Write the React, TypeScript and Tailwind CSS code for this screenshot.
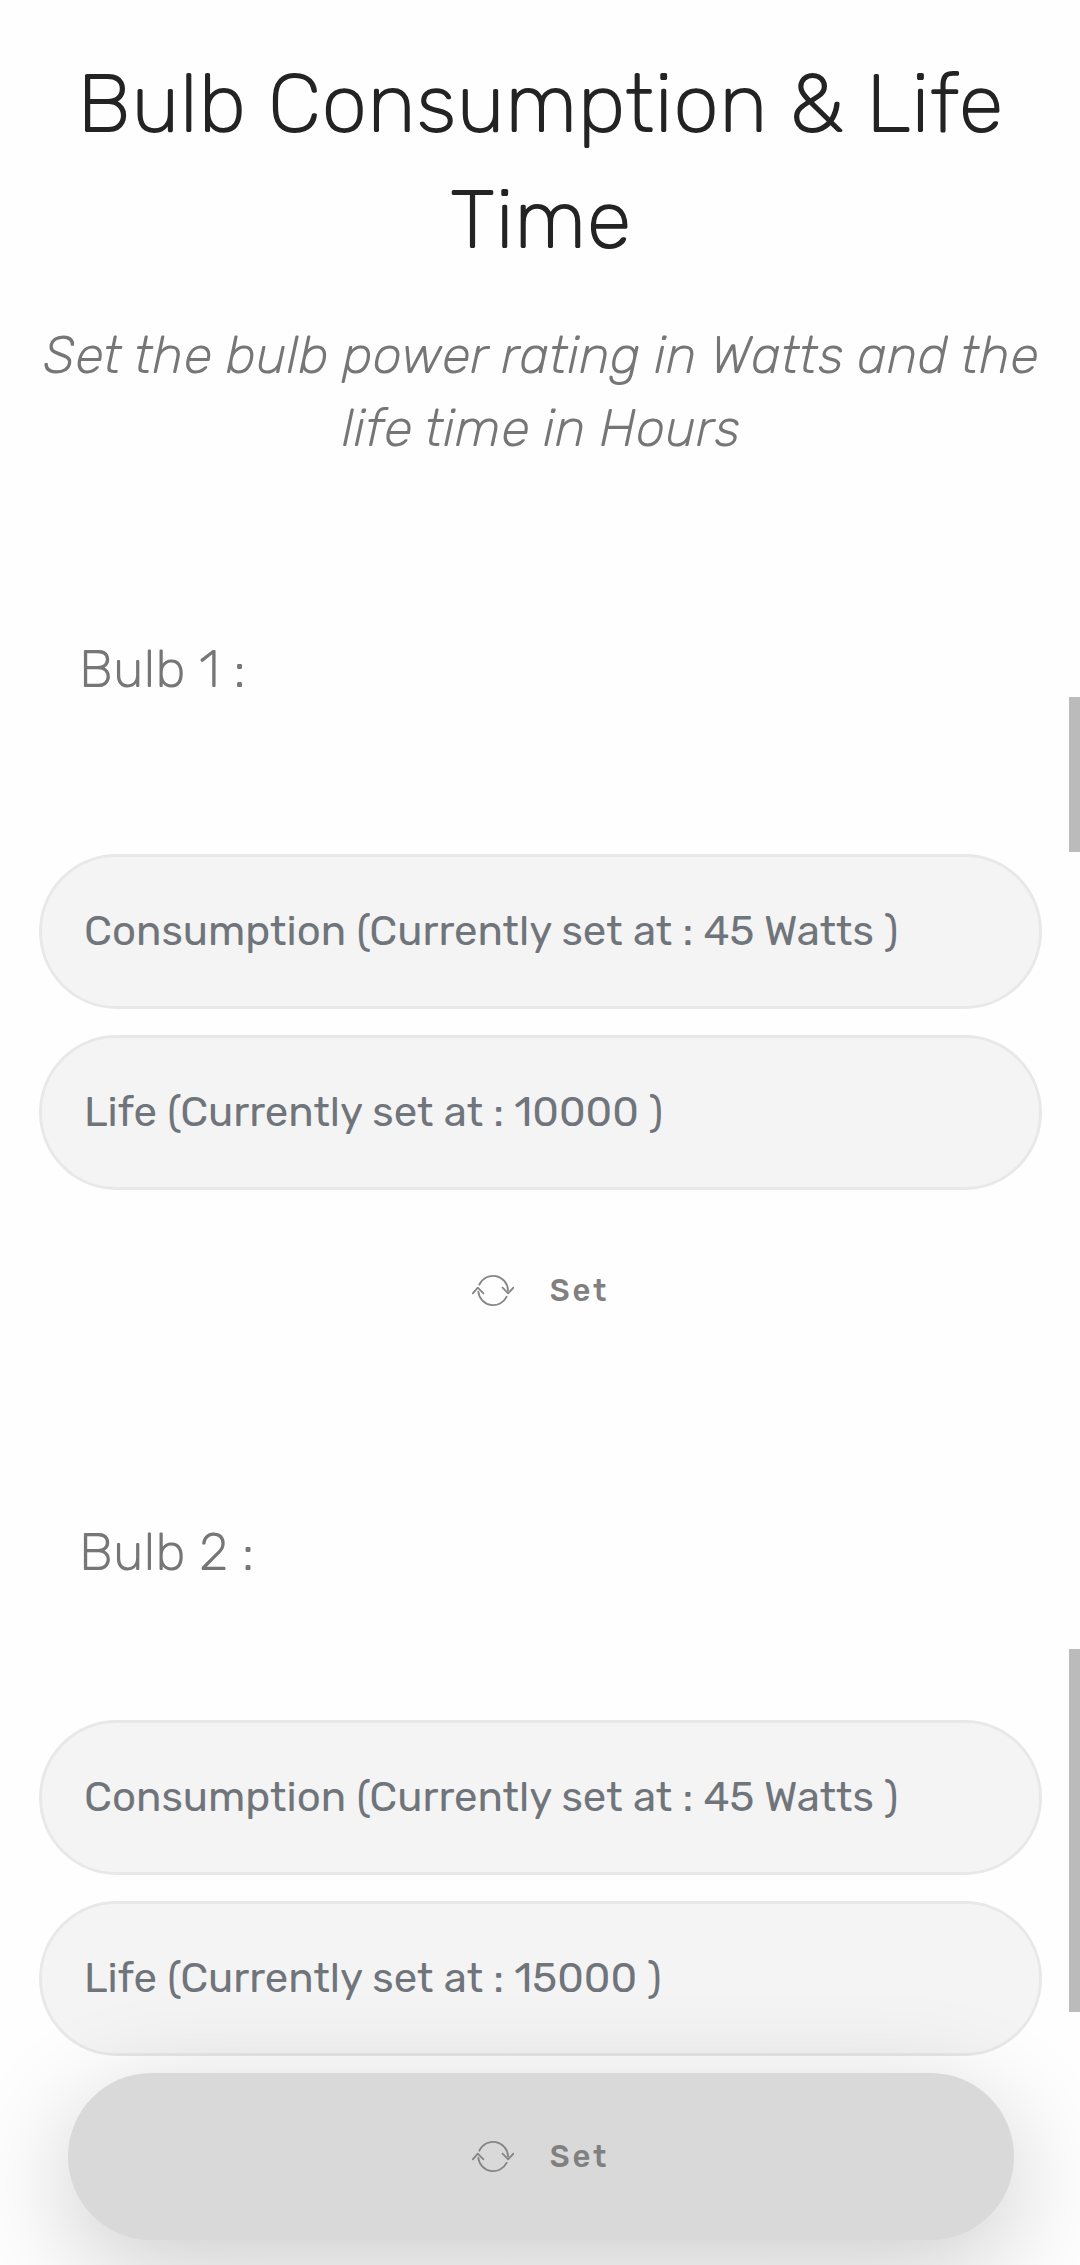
const UpdateIcon = () => (
  <svg className="mt-px h-[42px] w-[42px] shrink-0" viewBox="0 0 42 42" fill="none" stroke="#858585" strokeWidth="1.8" strokeLinecap="round" strokeLinejoin="round">
    <path d="M7.3 14.7A15 15 0 0 1 36 20.5" />
    <path d="M6.3 21.7A15 15 0 0 0 34.7 26.7" />
    <path d="M.8 23.3l5-5.6 5.6 5.6M30.6 17.7l5.5 5.6 5.3-5.6" />
  </svg>
);

function Field({ text }: { text: string }) {
  return (
    <div className="flex h-[155px] items-center whitespace-pre rounded-full border-[3px] border-[#e8e8e8] bg-[#f4f4f4] pl-[42px] text-[41.95px] text-[#70757b]">
      {text}
    </div>
  );
}

function SetButton({ active = false }: { active?: boolean }) {
  return (
    <button
      className={`mx-[28.5px] mt-[16.5px] flex h-[167px] items-center justify-center rounded-full text-[31px] font-medium leading-none tracking-[2.75px] text-[#808080] ${
        active ? "bg-[#d9d9d9] shadow-[0_27.5px_110px_rgba(0,0,0,0.2)]" : ""
      }`}
    >
      <UpdateIcon />
      <span className="ml-[36px] pt-px">Set</span>
    </button>
  );
}

export default function App() {
  return (
    <div className="relative h-[2265px] w-[1080px] overflow-hidden bg-[#fefefe] font-['Rubik','Roboto',sans-serif]">
      <header className="pt-[47px] text-center font-light">
        <h1 className="pl-px text-[82.6px] leading-[115.5px] text-[#232323]">
          Bulb Consumption &amp; Life
          <br />
          Time
        </h1>
        <h2 className="mt-[41px] pl-[2px] text-[52.3px] italic leading-[73.2px] text-[#767676]">
          Set the bulb power rating in Watts and the
          <br />
          life time in Hours
        </h2>
      </header>
      <main className="mx-[39px] mr-[38px] flex flex-col">
        <h3 className="ml-[40px] mt-[166.6px] text-[52.2px] font-light leading-[74px] text-[#767676]">Bulb 1 :</h3>
        <div className="mt-[148px] flex flex-col gap-[26px]">
          <Field text="Consumption (Currently set at : 45 Watts )" />
          <Field text="Life (Currently set at : 10000 )" />
        </div>
        <SetButton />
        <h3 className="ml-[40px] mt-[141px] text-[52.2px] font-light leading-[74px] text-[#767676]">Bulb 2 :</h3>
        <div className="mt-[131.5px] flex flex-col gap-[26px]">
          <Field text="Consumption (Currently set at : 45 Watts )" />
          <Field text="Life (Currently set at : 15000 )" />
        </div>
        <SetButton active />
      </main>
      <div className="absolute right-0 top-[697px] h-[155px] w-[11px] bg-[#bbbbbb]" />
      <div className="absolute right-0 top-[1649px] h-[363px] w-[11px] bg-[#bbbbbb]" />
    </div>
  );
}
